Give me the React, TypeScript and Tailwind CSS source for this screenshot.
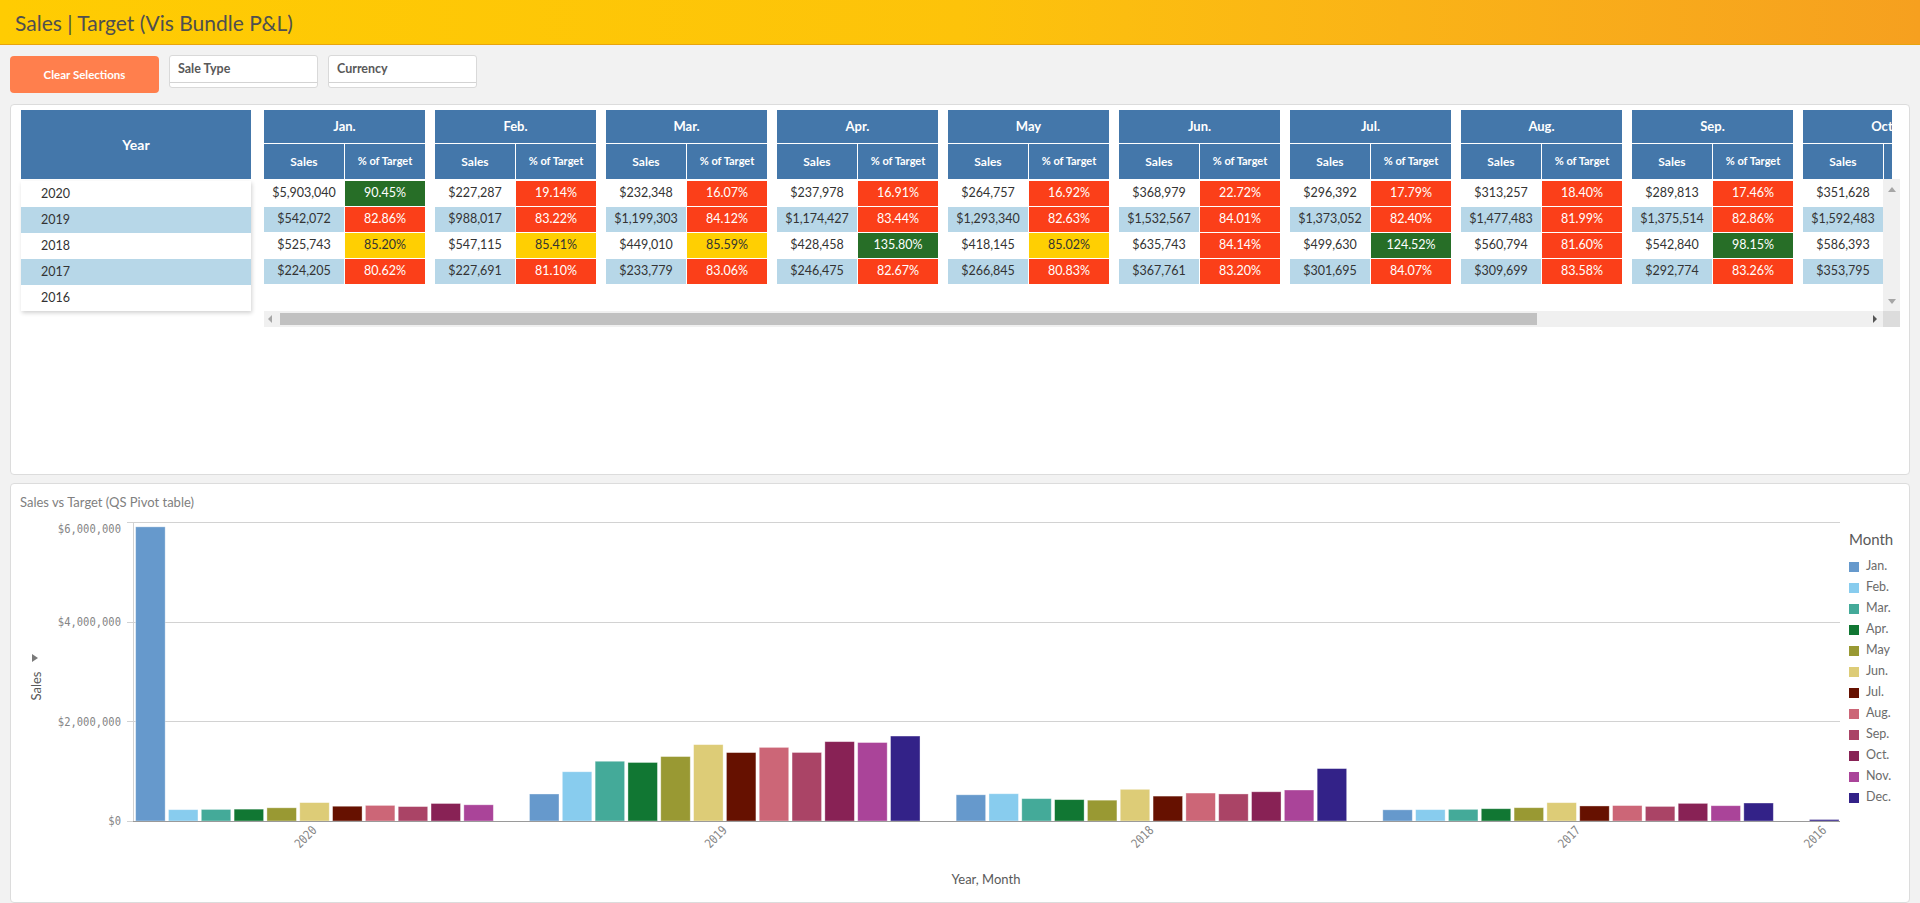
import React from 'react';

type Tone = 'r' | 'g' | 'y';
type Cell = [string, string, Tone];

const months = ['Jan.', 'Feb.', 'Mar.', 'Apr.', 'May', 'Jun.', 'Jul.', 'Aug.', 'Sep.', 'Oct.', 'Nov.', 'Dec.'];

const tableData: Cell[][] = [
  [['$5,903,040', '90.45%', 'g'], ['$542,072', '82.86%', 'r'], ['$525,743', '85.20%', 'y'], ['$224,205', '80.62%', 'r']],
  [['$227,287', '19.14%', 'r'], ['$988,017', '83.22%', 'r'], ['$547,115', '85.41%', 'y'], ['$227,691', '81.10%', 'r']],
  [['$232,348', '16.07%', 'r'], ['$1,199,303', '84.12%', 'r'], ['$449,010', '85.59%', 'y'], ['$233,779', '83.06%', 'r']],
  [['$237,978', '16.91%', 'r'], ['$1,174,427', '83.44%', 'r'], ['$428,458', '135.80%', 'g'], ['$246,475', '82.67%', 'r']],
  [['$264,757', '16.92%', 'r'], ['$1,293,340', '82.63%', 'r'], ['$418,145', '85.02%', 'y'], ['$266,845', '80.83%', 'r']],
  [['$368,979', '22.72%', 'r'], ['$1,532,567', '84.01%', 'r'], ['$635,743', '84.14%', 'r'], ['$367,761', '83.20%', 'r']],
  [['$296,392', '17.79%', 'r'], ['$1,373,052', '82.40%', 'r'], ['$499,630', '124.52%', 'g'], ['$301,695', '84.07%', 'r']],
  [['$313,257', '18.40%', 'r'], ['$1,477,483', '81.99%', 'r'], ['$560,794', '81.60%', 'r'], ['$309,699', '83.58%', 'r']],
  [['$289,813', '17.46%', 'r'], ['$1,375,514', '82.86%', 'r'], ['$542,840', '98.15%', 'g'], ['$292,774', '83.26%', 'r']],
  [['$351,628', '21.03%', 'r'], ['$1,592,483', '83.71%', 'r'], ['$586,393', '84.52%', 'r'], ['$353,795', '82.94%', 'r']],
];

const years = ['2020', '2019', '2018', '2017', '2016'];

const toneClass: Record<Tone, string> = {
  r: 'bg-[#fb3f19] text-white',
  g: 'bg-[#276e27] text-white',
  y: 'bg-[#ffcf02] text-[#333333]',
};

const colors = ['#6699cc', '#88ccee', '#44aa99', '#117733', '#999933', '#ddcc77', '#661100', '#cc6677', '#aa4466', '#882255', '#aa4499', '#332288'];

// sales per year, per month index; used for the bar chart
const chartGroups: { year: string; start: number; bars: [number, number][] }[] = [
  { year: '2020', start: 0, bars: [5903040, 227287, 232348, 237978, 264757, 368979, 296392, 313257, 289813, 351628, 325000].map((v, i) => [i, v] as [number, number]) },
  { year: '2019', start: 12, bars: [542072, 988017, 1199303, 1174427, 1293340, 1532567, 1373052, 1477483, 1375514, 1592483, 1575000, 1705000].map((v, i) => [i, v] as [number, number]) },
  { year: '2018', start: 25, bars: [525743, 547115, 449010, 428458, 418145, 635743, 499630, 560794, 542840, 586393, 622000, 1052000].map((v, i) => [i, v] as [number, number]) },
  { year: '2017', start: 38, bars: [224205, 227691, 233779, 246475, 266845, 367761, 301695, 309699, 292774, 353795, 307000, 361000].map((v, i) => [i, v] as [number, number]) },
  { year: '2016', start: 51, bars: [[11, 30000]] },
];

const SLOT = 32.82;
const X0 = 123;
const BASE = 300;
const yOf = (v: number) => BASE - (v / 1e6) * 49.83;
const mono = "'DejaVu Sans Mono', 'Liberation Mono', monospace";

function FilterBox({ title }: { title: string }) {
  return (
    <div className="w-[149px] h-[33px] bg-white border border-[#d9d9d9] rounded-[3px] flex flex-col">
      <div className="h-[27px] border-b border-[#d3d3d3] px-[8px] flex items-center text-[12.5px] font-bold text-[#595959]">
        {title}
      </div>
    </div>
  );
}

function PivotTable() {
  return (
    <div className="flex items-start pl-[10px] pt-[5px]">
      <div className="w-[230px]">
        <div className="h-[69px] bg-[#4477aa] flex items-center justify-center text-[14px] font-bold text-white">Year</div>
        <div className="mt-[2px] shadow-[1px_2px_4px_rgba(0,0,0,0.18)]">
          {years.map((y, i) => (
            <div key={y} className={`h-[26px] flex items-center pl-[20px] text-[12.5px] text-[#333333] ${i % 2 === 1 ? 'bg-[#b7d7e8]' : 'bg-white'}`}>
              {y}
            </div>
          ))}
        </div>
      </div>

      <div className="ml-[13px] w-[1636px] flex flex-col">
        <div className="w-[1628px] h-[69px] overflow-hidden">
          <div className="flex gap-[10px] w-max">
            {tableData.map((_, m) => (
              <div key={m} className="w-[161px] flex flex-col">
                <div className="h-[33px] bg-[#4477aa] flex items-center justify-center text-[13px] font-bold text-white">{months[m]}</div>
                <div className="mt-[1px] flex gap-[1px]">
                  <div className="w-[80px] h-[35px] bg-[#4477aa] flex items-center justify-center text-[12px] font-bold text-white">Sales</div>
                  <div className="w-[80px] h-[35px] bg-[#4477aa] flex items-center justify-center text-[11px] font-bold text-white">% of Target</div>
                </div>
              </div>
            ))}
          </div>
        </div>

        <div className="flex h-[132px]">
          <div className="w-[1619px] overflow-hidden pt-[2px]">
            <div className="flex gap-[10px] w-max">
              {tableData.map((col, m) => (
                <div key={m} className="w-[161px] flex flex-col gap-[1px]">
                  {col.map(([s, p, t], r) => (
                    <div key={r} className="h-[25px] flex gap-[1px] text-[12.5px]">
                      <div className={`w-[80px] flex items-center justify-center text-[#333333] ${r % 2 === 1 ? 'bg-[#b7d7e8]' : 'bg-white'}`}>{s}</div>
                      <div className={`w-[80px] flex items-center justify-center ${toneClass[t]}`}>{p}</div>
                    </div>
                  ))}
                </div>
              ))}
            </div>
          </div>
          <div className="w-[17px] bg-[#f0f0f0] flex flex-col items-center justify-between pt-[8px] pb-[7px]">
            <span className="border-x-[4px] border-x-transparent border-b-[5px] border-b-[#a6a6a6]" />
            <span className="border-x-[4px] border-x-transparent border-t-[5px] border-t-[#a6a6a6]" />
          </div>
        </div>

        <div className="flex h-[16px]">
          <div className="w-[1619px] bg-[#f0f0f0] flex items-center">
            <span className="ml-[4px] border-y-[4px] border-y-transparent border-r-[4px] border-r-[#a6a6a6]" />
            <div className="ml-[8px] w-[1257px] h-[12px] bg-[#c1c1c1]" />
            <span className="ml-auto mr-[6px] border-y-[4px] border-y-transparent border-l-[4px] border-l-[#555555]" />
          </div>
          <div className="w-[17px] bg-[#dcdcdc]" />
        </div>
      </div>
    </div>
  );
}

function BarChart() {
  const grid = [6e6, 4e6, 2e6];
  const labelY: [string, number][] = [
    ['$6,000,000', 8],
    ['$4,000,000', yOf(4e6)],
    ['$2,000,000', yOf(2e6)],
    ['$0', BASE],
  ];
  return (
    <svg width={1836} height={381} className="block">
      {grid.map((g) => (
        <line key={g} x1={116} x2={1829} y1={Math.round(yOf(g)) + 0.5} y2={Math.round(yOf(g)) + 0.5} stroke="#d2d2d2" strokeWidth={1} />
      ))}
      <line x1={116} x2={122} y1={BASE + 0.5} y2={BASE + 0.5} stroke="#d2d2d2" />
      <line x1={122.5} x2={122.5} y1={1} y2={BASE} stroke="#d2d2d2" />
      {labelY.map(([t, y]) => (
        <text key={t} x={0} y={0} transform={`translate(110 ${y}) scale(0.84 1)`} textAnchor="end" dominantBaseline="central" fontFamily={mono} fontSize={12.5} fill="#858585">
          {t}
        </text>
      ))}
      <path d="M21 133 L27 137 L21 141 Z" fill="#7a7a7a" />
      <text x={0} y={0} transform="translate(25 165) rotate(-90)" textAnchor="middle" dominantBaseline="central" fontFamily="Lato, sans-serif" fontSize={13} fill="#595959">
        Sales
      </text>
      {chartGroups.map((g) =>
        g.bars.map(([m, v], i) => {
          const slot = g.start + (g.year === '2016' ? 0 : i);
          const x = X0 + slot * SLOT + 1.65;
          const y = yOf(v);
          return <rect key={`${g.year}-${m}`} x={x} y={y} width={29.5} height={BASE - y} fill={colors[m]} stroke="#ffffff" strokeOpacity={0.45} strokeWidth={0.8} />;
        })
      )}
      <line x1={122} x2={1829} y1={BASE + 0.5} y2={BASE + 0.5} stroke="#9a9a9a" strokeWidth={1} />
      {chartGroups.map((g) => {
        const n = g.bars.length;
        const cx = X0 + (g.start + n / 2) * SLOT + 3;
        return (
          <text key={g.year} x={0} y={0} transform={`translate(${cx} 310) rotate(-45) scale(0.84 1)`} textAnchor="end" fontFamily={mono} fontSize={12.5} fill="#858585">
            {g.year}
          </text>
        );
      })}
      <text x={975} y={358} textAnchor="middle" dominantBaseline="central" fontFamily="Lato, sans-serif" fontSize={13} fill="#595959">
        Year, Month
      </text>
    </svg>
  );
}

function Legend() {
  return (
    <div className="pl-[2px] pt-[8px] flex flex-col">
      <div className="h-[20px] flex items-center text-[15px] text-[#595959]">Month</div>
      <div className="mt-[7px] flex flex-col">
        {months.map((m, i) => (
          <div key={m} className="h-[21px] flex items-center gap-[7px] text-[12.5px] text-[#6b6b6b]">
            <span className="w-[10px] h-[10px]" style={{ backgroundColor: colors[i] }} />
            {m}
          </div>
        ))}
      </div>
    </div>
  );
}

export default function App() {
  return (
    <div className="w-[1920px] h-[903px] overflow-hidden bg-[#f2f2f2] font-['Lato',sans-serif]">
      <header className="h-[45px] border-b border-[#e8a40e] bg-linear-to-r from-[#ffcc02] via-[#fdc30a] to-[#f6a01f] flex items-center pl-[15px]">
        <h1 className="text-[21px] text-[#4f4f4f] leading-none">Sales | Target (Vis Bundle P&amp;L)</h1>
      </header>

      <div className="flex items-start gap-[10px] pl-[10px] pt-[10px]">
        <button type="button" className="mt-[1px] w-[149px] h-[37px] rounded-[4px] bg-[#ff7f4d] text-white text-[11.5px] font-bold">
          Clear Selections
        </button>
        <FilterBox title="Sale Type" />
        <FilterBox title="Currency" />
      </div>

      <div className="mt-[11px] ml-[10px] w-[1900px] h-[371px] bg-white border border-[#dcdcdc] rounded-[4px]">
        <PivotTable />
      </div>

      <div className="mt-[8px] ml-[10px] w-[1900px] h-[420px] bg-white border border-[#dcdcdc] rounded-[4px] flex flex-col">
        <div className="h-[37px] flex items-center pl-[9px] text-[13px] text-[#808080]">Sales vs Target (QS Pivot table)</div>
        <div className="flex">
          <BarChart />
          <Legend />
        </div>
      </div>
    </div>
  );
}
